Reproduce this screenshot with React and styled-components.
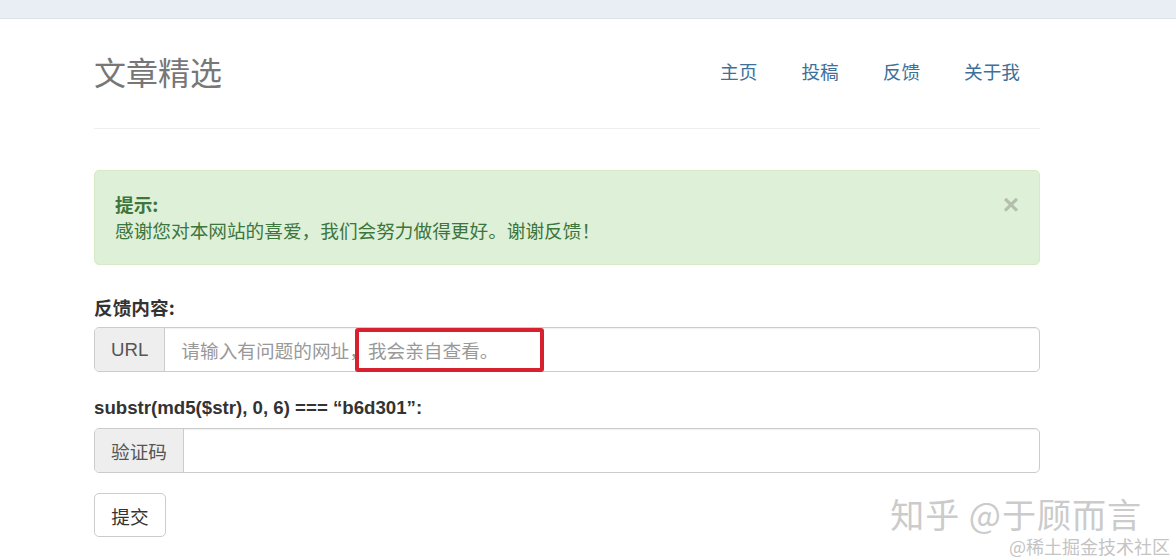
import React from 'react'
import styled, { createGlobalStyle } from 'styled-components'

const GlobalStyle = createGlobalStyle`
    html, body {
        margin: 0;
        padding: 0;
        background: #fff;
    }
    body {
        font-family: "Liberation Sans", "Noto Sans CJK SC", sans-serif;
        font-size: 18.67px;
        color: #333;
    }
    * {
        box-sizing: border-box;
    }
`

const App = () => {
    return (
        <Page>
            <GlobalStyle />
            <TopBar />
            <Container>
                <Header>
                    <Brand>文章精选</Brand>
                    <Nav>
                        <NavLink href="#">主页</NavLink>
                        <NavLink href="#">投稿</NavLink>
                        <NavLink href="#">反馈</NavLink>
                        <NavLink href="#">关于我</NavLink>
                    </Nav>
                </Header>
                <Divider />

                <Alert>
                    <AlertBody>
                        <AlertTitle>提示:</AlertTitle>
                        <AlertText>感谢您对本网站的喜爱，我们会努力做得更好。谢谢反馈！</AlertText>
                    </AlertBody>
                    <Close>×</Close>
                </Alert>

                <Label>反馈内容:</Label>
                <InputGroup>
                    <Addon>URL</Addon>
                    <Input placeholder="请输入有问题的网址，我会亲自查看。" />
                    <Highlight />
                </InputGroup>

                <Label $latin $top={23}>substr(md5($str), 0, 6) === “b6d301”:</Label>
                <InputGroup>
                    <Addon>验证码</Addon>
                    <Input />
                </InputGroup>

                <Button>提交</Button>
            </Container>

            <Watermark>
                <Mark>知乎 @于顾而言</Mark>
                <SubMark>@稀土掘金技术社区</SubMark>
            </Watermark>
        </Page>
    )
}

export default App

const Page = styled.div`
    position: relative;
    height: 560px;
    overflow: hidden;
`
const TopBar = styled.div`
    height: 19px;
    background: #e9eef4;
    border-bottom: 1px solid #dde2e8;
`
const Container = styled.div`
    margin-left: 94px;
    width: 946px;
    display: flex;
    flex-direction: column;
    align-items: stretch;
`
const Header = styled.div`
    height: 109px;
    padding-bottom: 5px;
    display: flex;
    align-items: center;
    justify-content: space-between;
`
const Brand = styled.h3`
    margin: 0;
    font-family: "Noto Sans CJK SC", sans-serif;
    font-size: 32px;
    font-weight: 400;
    line-height: 40px;
    color: #777;
`
const Nav = styled.nav`
    display: flex;
    align-items: center;
    gap: 4px;
    margin-top: -1px;
`
const NavLink = styled.a`
    padding: 10px 20px;
    font-family: "Noto Sans CJK SC", sans-serif;
    font-size: 18.67px;
    line-height: 26px;
    color: #3e7099;
    text-decoration: none;
`
const Divider = styled.hr`
    margin: 0;
    border: 0;
    border-top: 1px solid #eee;
`
const Alert = styled.div`
    margin-top: 41px;
    margin-bottom: 29px;
    padding: 20px 20px 21px;
    display: flex;
    justify-content: space-between;
    align-items: flex-start;
    background: #dff0d8;
    border: 1px solid #d6e9c6;
    border-radius: 5px;
    color: #3c763d;
    font-family: "Noto Sans CJK SC", sans-serif;
`
const AlertBody = styled.div`
    display: flex;
    flex-direction: column;
`
const AlertTitle = styled.strong`
    font-size: 18.67px;
    line-height: 26px;
    font-weight: 700;
`
const AlertText = styled.span`
    font-size: 18.67px;
    line-height: 26px;
`
const Close = styled.span`
    font-family: "Liberation Sans", sans-serif;
    font-size: 28px;
    font-weight: 700;
    line-height: 26px;
    color: #000;
    opacity: 0.2;
    margin-top: 1px;
`
const Label = styled.label`
    margin-top: ${p => (p.$top || 0)}px;
    margin-bottom: 7px;
    font-family: ${p => (p.$latin ? '"Liberation Sans", "Noto Sans CJK SC", sans-serif' : '"Noto Sans CJK SC", sans-serif')};
    font-size: 18.67px;
    font-weight: 700;
    line-height: 26px;
    color: #333;
`
const InputGroup = styled.div`
    position: relative;
    display: flex;
    height: 45px;
    border: 1px solid #ccc;
    border-radius: 5px;
    box-shadow: inset 0 1px 1px rgba(0, 0, 0, 0.06);
`
const Addon = styled.span`
    display: flex;
    align-items: center;
    padding: 0 16px;
    background: #eee;
    border-right: 1px solid #ccc;
    border-radius: 4px 0 0 4px;
    color: #555;
    font-size: 18.67px;
    font-family: "Liberation Sans", "Noto Sans CJK SC", sans-serif;
`
const Input = styled.input`
    flex: 1;
    border: 0;
    outline: none;
    padding: 0 16px;
    background: transparent;
    font-family: "Noto Sans CJK SC", sans-serif;
    font-size: 18.67px;
    color: #555;

    &::placeholder {
        color: #999;
    }
`
const Highlight = styled.span`
    position: absolute;
    left: 260px;
    top: 0;
    width: 189px;
    height: 44px;
    border: 4px solid #d8212f;
    border-radius: 3px;
    pointer-events: none;
`
const Button = styled.button`
    margin-top: 20px;
    width: 72px;
    height: 44px;
    padding: 0;
    background: #fff;
    border: 1px solid #ccc;
    border-radius: 5px;
    font-family: "Noto Sans CJK SC", sans-serif;
    font-size: 18.67px;
    color: #333;
`
const Watermark = styled.div`
    position: absolute;
    right: 6px;
    bottom: 4px;
    display: flex;
    flex-direction: column;
    align-items: flex-end;
    gap: 5px;
    pointer-events: none;
`
const Mark = styled.div`
    margin-right: 28px;
    font-family: "Noto Sans CJK SC", sans-serif;
    font-size: 34px;
    line-height: 34px;
    color: #cbcbcb;
    text-shadow: 1px 1px 0 rgba(255, 255, 255, 0.8);
    letter-spacing: 1px;
`
const SubMark = styled.div`
    font-family: "Noto Sans CJK SC", sans-serif;
    font-size: 18px;
    line-height: 20px;
    color: #c4c4c4;
`
